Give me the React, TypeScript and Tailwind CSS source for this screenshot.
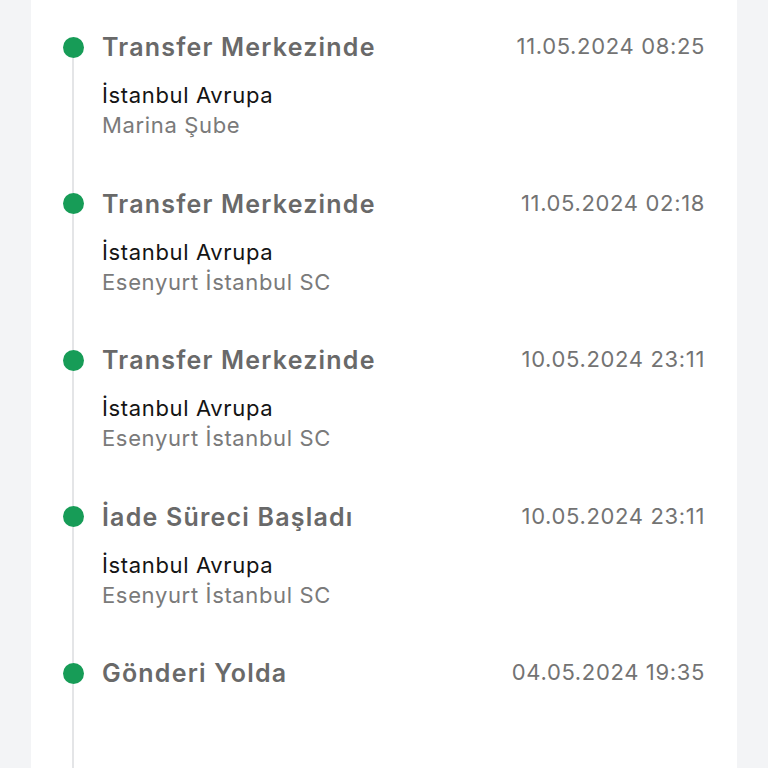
import React from "react";

type Item = { title: string; date: string; line1?: string; line2?: string };

const items: Item[] = [
  { title: "Transfer Merkezinde", date: "11.05.2024 08:25", line1: "İstanbul Avrupa", line2: "Marina Şube" },
  { title: "Transfer Merkezinde", date: "11.05.2024 02:18", line1: "İstanbul Avrupa", line2: "Esenyurt İstanbul SC" },
  { title: "Transfer Merkezinde", date: "10.05.2024 23:11", line1: "İstanbul Avrupa", line2: "Esenyurt İstanbul SC" },
  { title: "İade Süreci Başladı", date: "10.05.2024 23:11", line1: "İstanbul Avrupa", line2: "Esenyurt İstanbul SC" },
  { title: "Gönderi Yolda", date: "04.05.2024 19:35" },
];

export default function App() {
  return (
    <div
      className="w-[768px] h-[768px] overflow-hidden bg-[#f3f4f6] px-[31px]"
      style={{ fontFamily: "Inter, 'Noto Sans', sans-serif" }}
    >
      <div className="bg-white h-full pl-[31px] pr-[32px]">
        {items.map((it, i) => (
          <div key={i} className="flex h-[156.5px]">
            <div className="w-[22px] flex flex-col items-center">
              <div className={i === 0 ? "h-[36.5px]" : "h-[36.5px] w-[2px] bg-[#e4e5e7]"} />
              <div className="w-[21px] h-[21px] rounded-full bg-[#179c57] shrink-0" />
              <div className="w-[2px] flex-1 bg-[#e4e5e7]" />
            </div>
            <div className="flex-1 pl-[18px] pt-[30px]">
              <div className="flex justify-between items-start">
                <div className="text-[25px] leading-[34px] font-semibold text-[#696969] tracking-[1.2px]">
                  {it.title}
                </div>
                <div className="text-[22px] leading-[30px] text-[#737373] tracking-[0.65px] pt-[1px]">{it.date}</div>
              </div>
              {it.line1 && (
                <div className="mt-[16px]">
                  <div className="text-[22px] leading-[30px] text-[#141414] tracking-[0.65px]">{it.line1}</div>
                  <div className="text-[22px] leading-[30px] text-[#7a7a7a] tracking-[0.65px]">{it.line2}</div>
                </div>
              )}
            </div>
          </div>
        ))}
      </div>
    </div>
  );
}
